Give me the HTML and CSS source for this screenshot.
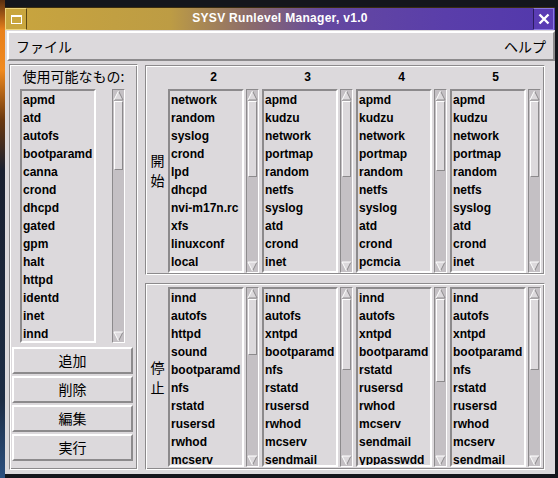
FILE: index.html
```html
<!DOCTYPE html>
<html lang="ja">
<head>
    <meta charset="UTF-8">
    <title>SYSV Runlevel Manager, v1.0</title>
    <link rel="stylesheet" href="styles.css">
</head>
<body>
    <div class="window">
        <div class="titlebar">
            <div class="tb-icon"><span></span></div>
            <div class="tb-title">SYSV Runlevel Manager, v1.0</div>
            <div class="tb-close">
                <svg width="12" height="12" viewBox="0 0 12 12"><path d="M1.5,1.5 L10.5,10.5 M10.5,1.5 L1.5,10.5" stroke="#fff" stroke-width="2.4"/></svg>
            </div>
        </div>

        <div class="menubar">
            <span>ファイル</span>
            <span>ヘルプ</span>
        </div>

        <div class="main">
            <div class="avail">
                <div class="avail-label">使用可能なもの:</div>
                <div class="avail-row">
                    <div class="list">
                        <div>apmd</div><div>atd</div><div>autofs</div><div>bootparamd</div>
                        <div>canna</div><div>crond</div><div>dhcpd</div><div>gated</div>
                        <div>gpm</div><div>halt</div><div>httpd</div><div>identd</div>
                        <div>inet</div><div>innd</div>
                    </div>
                    <div class="sb">
                        <svg class="arrow" width="11" height="11" viewBox="0 0 11 11"><polygon points="5.5,1 10,10 1,10" fill="#dcd9dc"/><path d="M5.5,1 L10,10 L1,10" stroke="#8c8a8c" fill="none"/><path d="M1,10 L5.5,1" stroke="#fff" fill="none"/></svg>
                        <div class="thumb" style="height:69px"></div>
                        <div class="sb-fill"></div>
                        <svg class="arrow" width="11" height="11" viewBox="0 0 11 11"><polygon points="1,1 10,1 5.5,10" fill="#dcd9dc"/><path d="M10,1 L5.5,10" stroke="#8c8a8c" fill="none"/><path d="M5.5,10 L1,1 L10,1" stroke="#fff" fill="none"/></svg>
                    </div>
                </div>
                <div class="btns">
                    <div class="btn">追加</div>
                    <div class="btn">削除</div>
                    <div class="btn">編集</div>
                    <div class="btn">実行</div>
                </div>
            </div>

            <div class="groups">
                <div class="group group-start">
                    <div class="side">開<br>始</div>
                    <div class="gbody">
                        <div class="heads">
                            <div>2</div><div>3</div><div>4</div><div>5</div>
                        </div>
                        <div class="cols">
                            <div class="col">
                                <div class="list">
                                    <div>network</div><div>random</div><div>syslog</div><div>crond</div><div>lpd</div>
                                    <div>dhcpd</div><div>nvi-m17n.rc</div><div>xfs</div><div>linuxconf</div><div>local</div>
                                </div>
                                <div class="sb">
                                    <svg class="arrow" width="11" height="11" viewBox="0 0 11 11"><polygon points="5.5,1 10,10 1,10" fill="#dcd9dc"/><path d="M5.5,1 L10,10 L1,10" stroke="#8c8a8c" fill="none"/><path d="M1,10 L5.5,1" stroke="#fff" fill="none"/></svg>
                                    <div class="thumb" style="height:76px"></div>
                                    <div class="sb-fill"></div>
                                    <svg class="arrow" width="11" height="11" viewBox="0 0 11 11"><polygon points="1,1 10,1 5.5,10" fill="#dcd9dc"/><path d="M10,1 L5.5,10" stroke="#8c8a8c" fill="none"/><path d="M5.5,10 L1,1 L10,1" stroke="#fff" fill="none"/></svg>
                                </div>
                            </div>
                            <div class="col">
                                <div class="list">
                                    <div>apmd</div><div>kudzu</div><div>network</div><div>portmap</div><div>random</div>
                                    <div>netfs</div><div>syslog</div><div>atd</div><div>crond</div><div>inet</div>
                                </div>
                                <div class="sb">
                                    <svg class="arrow" width="11" height="11" viewBox="0 0 11 11"><polygon points="5.5,1 10,10 1,10" fill="#dcd9dc"/><path d="M5.5,1 L10,10 L1,10" stroke="#8c8a8c" fill="none"/><path d="M1,10 L5.5,1" stroke="#fff" fill="none"/></svg>
                                    <div class="thumb" style="height:76px"></div>
                                    <div class="sb-fill"></div>
                                    <svg class="arrow" width="11" height="11" viewBox="0 0 11 11"><polygon points="1,1 10,1 5.5,10" fill="#dcd9dc"/><path d="M10,1 L5.5,10" stroke="#8c8a8c" fill="none"/><path d="M5.5,10 L1,1 L10,1" stroke="#fff" fill="none"/></svg>
                                </div>
                            </div>
                            <div class="col">
                                <div class="list">
                                    <div>apmd</div><div>kudzu</div><div>network</div><div>portmap</div><div>random</div>
                                    <div>netfs</div><div>syslog</div><div>atd</div><div>crond</div><div>pcmcia</div>
                                </div>
                                <div class="sb">
                                    <svg class="arrow" width="11" height="11" viewBox="0 0 11 11"><polygon points="5.5,1 10,10 1,10" fill="#dcd9dc"/><path d="M5.5,1 L10,10 L1,10" stroke="#8c8a8c" fill="none"/><path d="M1,10 L5.5,1" stroke="#fff" fill="none"/></svg>
                                    <div class="thumb" style="height:70px"></div>
                                    <div class="sb-fill"></div>
                                    <svg class="arrow" width="11" height="11" viewBox="0 0 11 11"><polygon points="1,1 10,1 5.5,10" fill="#dcd9dc"/><path d="M10,1 L5.5,10" stroke="#8c8a8c" fill="none"/><path d="M5.5,10 L1,1 L10,1" stroke="#fff" fill="none"/></svg>
                                </div>
                            </div>
                            <div class="col">
                                <div class="list">
                                    <div>apmd</div><div>kudzu</div><div>network</div><div>portmap</div><div>random</div>
                                    <div>netfs</div><div>syslog</div><div>atd</div><div>crond</div><div>inet</div>
                                </div>
                                <div class="sb">
                                    <svg class="arrow" width="11" height="11" viewBox="0 0 11 11"><polygon points="5.5,1 10,10 1,10" fill="#dcd9dc"/><path d="M5.5,1 L10,10 L1,10" stroke="#8c8a8c" fill="none"/><path d="M1,10 L5.5,1" stroke="#fff" fill="none"/></svg>
                                    <div class="thumb" style="height:76px"></div>
                                    <div class="sb-fill"></div>
                                    <svg class="arrow" width="11" height="11" viewBox="0 0 11 11"><polygon points="1,1 10,1 5.5,10" fill="#dcd9dc"/><path d="M10,1 L5.5,10" stroke="#8c8a8c" fill="none"/><path d="M5.5,10 L1,1 L10,1" stroke="#fff" fill="none"/></svg>
                                </div>
                            </div>
                        </div>
                    </div>
                </div>

                <div class="group group-stop">
                    <div class="side">停<br>止</div>
                    <div class="gbody">
                        <div class="cols">
                            <div class="col">
                                <div class="list">
                                    <div>innd</div><div>autofs</div><div>httpd</div><div>sound</div><div>bootparamd</div>
                                    <div>nfs</div><div>rstatd</div><div>rusersd</div><div>rwhod</div><div>mcserv</div>
                                </div>
                                <div class="sb">
                                    <svg class="arrow" width="11" height="11" viewBox="0 0 11 11"><polygon points="5.5,1 10,10 1,10" fill="#dcd9dc"/><path d="M5.5,1 L10,10 L1,10" stroke="#8c8a8c" fill="none"/><path d="M1,10 L5.5,1" stroke="#fff" fill="none"/></svg>
                                    <div class="thumb" style="height:56px"></div>
                                    <div class="sb-fill"></div>
                                    <svg class="arrow" width="11" height="11" viewBox="0 0 11 11"><polygon points="1,1 10,1 5.5,10" fill="#dcd9dc"/><path d="M10,1 L5.5,10" stroke="#8c8a8c" fill="none"/><path d="M5.5,10 L1,1 L10,1" stroke="#fff" fill="none"/></svg>
                                </div>
                            </div>
                            <div class="col">
                                <div class="list">
                                    <div>innd</div><div>autofs</div><div>xntpd</div><div>bootparamd</div><div>nfs</div>
                                    <div>rstatd</div><div>rusersd</div><div>rwhod</div><div>mcserv</div><div>sendmail</div>
                                </div>
                                <div class="sb">
                                    <svg class="arrow" width="11" height="11" viewBox="0 0 11 11"><polygon points="5.5,1 10,10 1,10" fill="#dcd9dc"/><path d="M5.5,1 L10,10 L1,10" stroke="#8c8a8c" fill="none"/><path d="M1,10 L5.5,1" stroke="#fff" fill="none"/></svg>
                                    <div class="thumb" style="height:71px"></div>
                                    <div class="sb-fill"></div>
                                    <svg class="arrow" width="11" height="11" viewBox="0 0 11 11"><polygon points="1,1 10,1 5.5,10" fill="#dcd9dc"/><path d="M10,1 L5.5,10" stroke="#8c8a8c" fill="none"/><path d="M5.5,10 L1,1 L10,1" stroke="#fff" fill="none"/></svg>
                                </div>
                            </div>
                            <div class="col">
                                <div class="list">
                                    <div>innd</div><div>autofs</div><div>xntpd</div><div>bootparamd</div><div>rstatd</div>
                                    <div>rusersd</div><div>rwhod</div><div>mcserv</div><div>sendmail</div><div>yppasswdd</div>
                                </div>
                                <div class="sb">
                                    <svg class="arrow" width="11" height="11" viewBox="0 0 11 11"><polygon points="5.5,1 10,10 1,10" fill="#dcd9dc"/><path d="M5.5,1 L10,10 L1,10" stroke="#8c8a8c" fill="none"/><path d="M1,10 L5.5,1" stroke="#fff" fill="none"/></svg>
                                    <div class="thumb" style="height:83px"></div>
                                    <div class="sb-fill"></div>
                                    <svg class="arrow" width="11" height="11" viewBox="0 0 11 11"><polygon points="1,1 10,1 5.5,10" fill="#dcd9dc"/><path d="M10,1 L5.5,10" stroke="#8c8a8c" fill="none"/><path d="M5.5,10 L1,1 L10,1" stroke="#fff" fill="none"/></svg>
                                </div>
                            </div>
                            <div class="col">
                                <div class="list">
                                    <div>innd</div><div>autofs</div><div>xntpd</div><div>bootparamd</div><div>nfs</div>
                                    <div>rstatd</div><div>rusersd</div><div>rwhod</div><div>mcserv</div><div>sendmail</div>
                                </div>
                                <div class="sb">
                                    <svg class="arrow" width="11" height="11" viewBox="0 0 11 11"><polygon points="5.5,1 10,10 1,10" fill="#dcd9dc"/><path d="M5.5,1 L10,10 L1,10" stroke="#8c8a8c" fill="none"/><path d="M1,10 L5.5,1" stroke="#fff" fill="none"/></svg>
                                    <div class="thumb" style="height:71px"></div>
                                    <div class="sb-fill"></div>
                                    <svg class="arrow" width="11" height="11" viewBox="0 0 11 11"><polygon points="1,1 10,1 5.5,10" fill="#dcd9dc"/><path d="M10,1 L5.5,10" stroke="#8c8a8c" fill="none"/><path d="M5.5,10 L1,1 L10,1" stroke="#fff" fill="none"/></svg>
                                </div>
                            </div>
                        </div>
                    </div>
                </div>
            </div>
        </div>
    </div>
</body>
</html>
```

FILE: styles.css
```css
* {
    box-sizing: border-box;
}

body {
    margin: 0;
    width: 558px;
    height: 478px;
    overflow: hidden;
    font-family: "Liberation Sans", Arial, sans-serif;
    color: #000;
    background:
        linear-gradient(to right, rgba(0, 0, 0, 0) 5px, #14161c 5px),
        linear-gradient(#5a3010 0, #e8801c 30px, #f08a20 70px, #6a3810 120px, #1a2030 170px, #1c2c44 400px, #2c5080);
}

.window {
    margin: 7px 0 0 5px;
    width: 550px;
    height: 467px;
    background: #dcd9dc;
}

/* title bar */
.titlebar {
    display: flex;
    height: 23px;
    background: linear-gradient(to right, #c9a53e 0%, #bd9c44 30%, #8a6a6c 45%, #6448a0 58%, #5a3eaa 80%, #5238ac 100%);
    border-top: 1px solid #3a2c10;
}

.tb-icon {
    width: 22px;
    background: #c9a63e;
    border: 1px solid #ecd47a;
    border-right-color: #5c4814;
    display: flex;
    align-items: center;
    justify-content: center;
}

.tb-icon span {
    width: 11px;
    height: 9px;
    border: 1px solid #fff;
    border-top-width: 2px;
}

.tb-title {
    flex: 1;
    text-align: center;
    color: #fff;
    font-weight: bold;
    font-size: 12px;
    letter-spacing: 0.3px;
    line-height: 21px;
}

.tb-close {
    width: 21px;
    margin-right: 1px;
    background: #5a3cb4;
    border: 1px solid #8a78e0;
    border-left-color: #2c1c60;
    display: flex;
    align-items: center;
    justify-content: center;
}

/* menu bar */
.menubar {
    margin: 1px 0 0 2px;
    height: 30px;
    display: flex;
    justify-content: space-between;
    align-items: center;
    padding: 0 7px;
    border: 2px solid;
    border-color: #fff #8c8a8c #8c8a8c #fff;
    font-family: "Noto Sans CJK JP", sans-serif;
    font-size: 14px;
}

.main {
    display: flex;
    padding: 3px 0 0 4px;
}

/* available services panel */
.avail {
    width: 129px;
    height: 406px;
    border: 1px solid;
    border-color: #8c8a8c #fff #fff #8c8a8c;
    box-shadow: inset 1px 1px #fff, inset -1px -1px #8c8a8c;
    padding: 1px;
    display: flex;
    flex-direction: column;
}

.avail-label {
    height: 23px;
    line-height: 21px;
    text-align: center;
    font-family: "Noto Sans CJK JP", sans-serif;
    font-size: 14px;
}

.avail-row {
    display: flex;
    gap: 16px;
    padding-left: 9px;
    height: 254px;
}

.list {
    width: 76px;
    border: 2px solid;
    border-color: #8c8a8c #fff #fff #8c8a8c;
    padding-left: 1px;
    overflow: hidden;
    white-space: nowrap;
    font-weight: bold;
    font-size: 12px;
    line-height: 18px;
}

.sb {
    width: 13px;
    border: 1px solid;
    border-color: #8c8a8c #fff #fff #8c8a8c;
    background: #c4c0c4;
    display: flex;
    flex-direction: column;
}

.arrow {
    display: block;
    flex: none;
}

.thumb {
    flex: none;
    margin: 0 1px;
    border: 1px solid;
    border-color: #fff #8c8a8c #8c8a8c #fff;
    background: #dcd9dc;
}

.sb-fill {
    flex: 1;
}

.btns {
    display: flex;
    flex-direction: column;
    gap: 2px;
    margin: 4px 0 0 1px;
}

.btn {
    width: 121px;
    height: 27px;
    border: 2px solid;
    border-color: #fff #8c8a8c #8c8a8c #fff;
    text-align: center;
    line-height: 22px;
    font-family: "Noto Sans CJK JP", sans-serif;
    font-size: 14px;
}

/* runlevel groups */
.groups {
    margin: 1px 0 0 7px;
    width: 400px;
    display: flex;
    flex-direction: column;
    gap: 8px;
}

.group {
    display: flex;
    border: 1px solid;
    border-color: #8c8a8c #fff #fff #8c8a8c;
    box-shadow: inset 1px 1px #fff, inset -1px -1px #8c8a8c;
    padding: 1px;
}

.group-start {
    height: 210px;
}

.group-stop {
    height: 187px;
}

.group-stop .gbody {
    padding-top: 2px;
}

.side {
    width: 21px;
    display: flex;
    align-items: center;
    justify-content: center;
    text-align: center;
    font-family: "Noto Sans CJK JP", sans-serif;
    font-size: 14px;
    line-height: 20px;
}

.heads {
    display: flex;
    gap: 3px;
    height: 22px;
}

.heads div {
    width: 91px;
    text-align: center;
    font-weight: bold;
    font-size: 12px;
    line-height: 21px;
}

.cols {
    display: flex;
    gap: 3px;
}

.col {
    display: flex;
    gap: 2px;
    width: 91px;
}

.group-start .list,
.group-start .sb {
    height: 184px;
}

.group-stop .list,
.group-stop .sb {
    height: 180px;
}
```
